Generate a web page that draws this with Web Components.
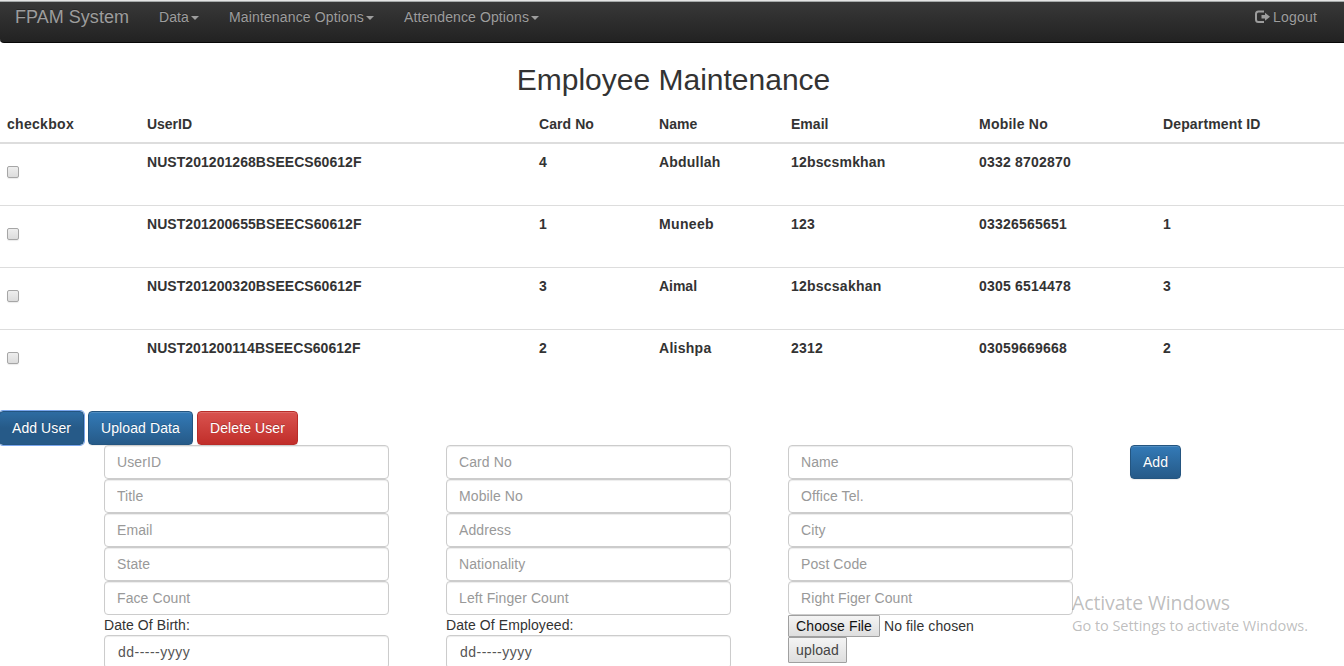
<!DOCTYPE html>
<html lang="en">
<head>
<meta charset="utf-8">
<title>Employee Maintenance</title>
<style>
html,body{margin:0;height:100%;overflow:hidden;background:#fff}
body{font:14px/20px "Liberation Sans",Arial,sans-serif;color:#333}
</style>
</head>
<body>
<fpam-app></fpam-app>
<script>
const define = (name, html, init) => customElements.define(name, class extends HTMLElement {
  connectedCallback() {
    if (this.shadowRoot) return;
    this.attachShadow({ mode: 'open' }).innerHTML = html;
    if (init) init(this, this.shadowRoot);
  }
});

/* Text tracked so that its advance equals the "w" attribute. */
define('fit-text', `<style>:host{display:inline-block;white-space:nowrap}</style><span><slot></slot></span>`, (host, root) => {
  const span = root.querySelector('span');
  const want = +host.getAttribute('w');
  const width = span.getBoundingClientRect().width;
  if (want && width) span.style.letterSpacing = (want - width) / host.textContent.length + 'px';
});

define('nav-link', `<style>
:host{display:flex;align-items:center;color:#9d9d9d;height:20px;text-shadow:0 -1px 0 rgba(0,0,0,.25)}
i{width:0;height:0;margin:1px 0 0 2px;border:4px solid transparent;border-top-color:currentColor;border-bottom:0}
</style><slot></slot><i></i>`);

define('nav-bar', `<style>
:host{display:block;border-top:1px solid #e4e4e4;box-sizing:border-box;height:43px}
nav{display:flex;align-items:flex-start;box-sizing:border-box;height:42px;padding:5px 27px 0 15px;border-top:1px solid #a5a9a9;border-bottom:1px solid #080808;border-radius:0 0 0 4px;background:linear-gradient(#383838,#222);color:#9d9d9d;text-shadow:0 -1px 0 rgba(0,0,0,.25)}
.brand{font-size:18px;margin-right:30px}
nav-link{margin-right:30px}
.out{margin-left:auto;display:flex;align-items:center}
svg{width:15px;height:14px;margin-right:3px}
</style>
<nav><fit-text class="brand" w="114">FPAM System</fit-text>
<nav-link><fit-text w="30">Data</fit-text></nav-link>
<nav-link><fit-text w="135">Maintenance Options</fit-text></nav-link>
<nav-link><fit-text w="125">Attendence Options</fit-text></nav-link>
<span class="out"><svg viewBox="0 0 15 14"><path d="M9 1.5H3.5Q1 1.5 1 4V9.5Q1 12 3.5 12H9" fill="none" stroke="#9d9d9d" stroke-width="2"/><path d="M6.5 5H10V2.8L15 6.8L10 10.8V8.6H6.5Z" fill="#9d9d9d"/></svg><fit-text w="44">Logout</fit-text></span></nav>`);

define('check-box', `<style>
:host{display:block;box-sizing:border-box;width:12px;height:12px;border:1px solid #a6a6a6;border-radius:2px;background:linear-gradient(#eee,#dcdcdc);box-shadow:0 1px 1px rgba(0,0,0,.08)}
</style>`);

define('employee-table', `<style>
:host{display:block;font-weight:700}
.row{display:grid;grid-template-columns:140px 392px 120px 132px 188px 184px 1fr;height:62px;box-sizing:border-box;border-top:1px solid #ddd;padding:8px 0 0 7px}
.head{height:38px;border-top:0;border-bottom:2px solid #ddd}
.head+.row{border-top:0;height:61px}
check-box{margin-top:14px}
</style>`, (host, root) => {
  const rows = [
    [['checkbox',67],['UserID',45],['Card No',55],['Name',38.5],['Email',37.5],['Mobile No',69],['Department ID',97.5]],
    [null,['NUST201201268BSEECS60612F',214.5],['4',8],['Abdullah',61.5],['12bscsmkhan',94.5],['0332 8702870',92],null],
    [null,['NUST201200655BSEECS60612F',214.5],['1',8],['Muneeb',55],['123',24],['03326565651',88],['1',8]],
    [null,['NUST201200320BSEECS60612F',214.5],['3',8],['Aimal',38],['12bscsakhan',90.5],['0305 6514478',92],['3',8]],
    [null,['NUST201200114BSEECS60612F',213.5],['2',8],['Alishpa',52.5],['2312',32],['03059669668',88],['2',8]]];
  root.innerHTML += rows.map((row, r) => `<div class="row${r ? '' : ' head'}">` + row.map((c, i) =>
    c ? `<div><fit-text w="${c[1]}">${c[0]}</fit-text></div>` : i ? '<div></div>' : '<div><check-box></check-box></div>').join('') + '</div>').join('');
});

define('ui-button', `<style>
:host{display:block;box-sizing:border-box;height:34px;padding:6px 12px;border:1px solid #245580;border-radius:4px;background:linear-gradient(#337ab7,#265a88);color:#fff;text-shadow:0 -1px 0 rgba(0,0,0,.2);box-shadow:inset 0 1px 0 rgba(255,255,255,.15),0 1px 1px rgba(0,0,0,.075);white-space:nowrap}
:host([kind=danger]){border-color:#b92c28;background:linear-gradient(#d9534f,#c12e2a)}
:host([kind=focus]){background:linear-gradient(#2d6ca2,#265a88 50%);box-shadow:0 0 0 1px #7ba7ee}
</style><slot></slot>`);

define('text-field', `<style>
:host{display:block}
input{display:block;box-sizing:border-box;width:100%;height:34px;margin:0;padding:6px 12px;border:1px solid #ccc;border-radius:4px;background:#fff;box-shadow:inset 0 1px 1px rgba(0,0,0,.075);font:inherit;color:#555;outline:0}
input::placeholder{color:#999;opacity:1;letter-spacing:.09px}
</style><input>`, (host, root) => {
  const input = root.querySelector('input');
  input.placeholder = host.getAttribute('label');
});

define('date-field', `<style>
:host{display:block;letter-spacing:.08px}
div{box-sizing:border-box;height:34px;padding:6px 13px;border:1px solid #ccc;border-radius:4px;color:#555;box-shadow:inset 0 1px 1px rgba(0,0,0,.075)}
</style><slot></slot><div><fit-text w="73">dd-----yyyy</fit-text></div>`);

define('native-button', `<style>
:host{display:inline-block;box-sizing:border-box;height:22px;line-height:20px;padding:0 7px;border:1px solid #a0a0a0;border-radius:1px;background:linear-gradient(#f4f4f4,#dedede);color:#111;white-space:nowrap}
</style><slot></slot>`);

define('employee-form', `<style>
:host{display:flex;gap:57px;padding-left:104px}
section{width:285px}
.file{display:flex;gap:4px;height:22px;line-height:22px}
.up{height:26px;line-height:24px;color:#444;display:block;width:59px}
</style>
<section data-f="UserID,Title,Email,State,Face Count"><date-field>Date Of Birth:</date-field></section>
<section data-f="Card No,Mobile No,Address,Nationality,Left Finger Count"><date-field>Date Of Employeed:</date-field></section>
<section data-f="Name,Office Tel.,City,Post Code,Right Figer Count"><div class="file"><native-button><fit-text w="76">Choose File</fit-text></native-button><fit-text w="90">No file chosen</fit-text></div><native-button class="up"><fit-text w="43">upload</fit-text></native-button></section>
<div><ui-button><fit-text w="25">Add</fit-text></ui-button></div>`, (host, root) => {
  root.querySelectorAll('section').forEach(s => s.insertAdjacentHTML('afterbegin',
    s.dataset.f.split(',').map(l => `<text-field label="${l}"></text-field>`).join('')));
});

define('windows-notice', `<style>
:host{position:absolute;left:1072px;top:591px;color:rgba(110,110,110,.46);font-family:"Open Sans","Noto Sans",sans-serif}
div{font-size:19.5px;line-height:24px}
p{margin:0;font-size:14.5px;line-height:21px}
</style><div><fit-text w="158">Activate Windows</fit-text></div><p><fit-text w="236">Go to Settings to activate Windows.</fit-text></p>`);

define('fpam-app', `<style>
:host{display:block;position:relative;height:666px;overflow:hidden}
h2{margin:20px 0 0;padding-left:3px;height:43px;font-size:30px;font-weight:400;line-height:33px;text-align:center}
.actions{display:flex;gap:4px;margin-top:20px;margin-left:-1px}
</style>
<nav-bar></nav-bar>
<h2>Employee Maintenance</h2>
<employee-table></employee-table>
<div class="actions"><ui-button kind="focus"><fit-text w="59">Add User</fit-text></ui-button><ui-button><fit-text w="79">Upload Data</fit-text></ui-button><ui-button kind="danger"><fit-text w="75">Delete User</fit-text></ui-button></div>
<employee-form></employee-form>
<windows-notice></windows-notice>`);
</script>
</body>
</html>
